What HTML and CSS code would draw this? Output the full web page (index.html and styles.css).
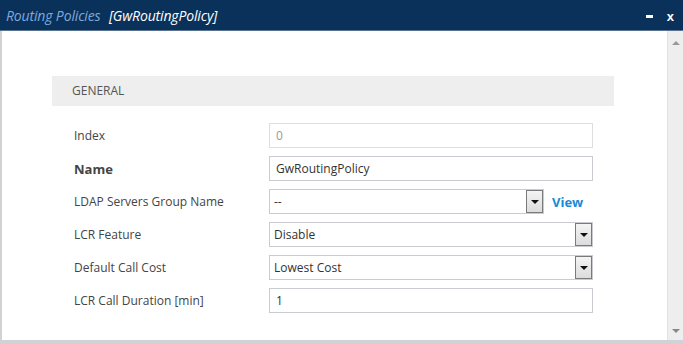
FILE: index.html
```html
<!DOCTYPE html>
<html lang="en">
<head>
  <meta charset="UTF-8" />
  <title>Routing Policies</title>
  <link rel="stylesheet" href="styles.css">
</head>
<body>
  <div class="dialog">
    <header class="titlebar">
      <div class="title">
        <span class="title-main">Routing Policies</span>
        <span class="title-sub">[GwRoutingPolicy]</span>
      </div>
      <div class="title-actions">
        <span class="btn-min"></span>
        <span class="btn-close">x</span>
      </div>
    </header>

    <div class="body">
      <main class="content">
        <div class="section-head">GENERAL</div>

        <div class="form-row">
          <label class="field-label">Index</label>
          <div class="field"><div class="input disabled">0</div></div>
        </div>
        <div class="form-row">
          <label class="field-label bold">Name</label>
          <div class="field"><div class="input">GwRoutingPolicy</div></div>
        </div>
        <div class="form-row">
          <label class="field-label">LDAP Servers Group Name</label>
          <div class="field">
            <div class="select short">--<span class="drop"><i></i></span></div>
            <a class="view-link">View</a>
          </div>
        </div>
        <div class="form-row">
          <label class="field-label">LCR Feature</label>
          <div class="field"><div class="select">Disable<span class="drop"><i></i></span></div></div>
        </div>
        <div class="form-row">
          <label class="field-label">Default Call Cost</label>
          <div class="field"><div class="select">Lowest Cost<span class="drop"><i></i></span></div></div>
        </div>
        <div class="form-row">
          <label class="field-label">LCR Call Duration [min]</label>
          <div class="field"><div class="input">1</div></div>
        </div>
      </main>

      <!-- scrollbar -->
      <div class="scrollbar">
        <span class="arrow up"></span>
        <span class="arrow down"></span>
      </div>
    </div>
  </div>
</body>
</html>
```

FILE: styles.css
```css
:root {
  --navy: #0a3159;
  --title-blue: #7fa9dc;
  --text: #444;
  --border: #c8ccd0;
  --link: #1a8ad6;
}
* { box-sizing: border-box; margin: 0; padding: 0; }
html, body { height: 100%; }
body {
  font-family: 'Open Sans', 'Liberation Sans', sans-serif;
  color: var(--text);
  background: #fff;
  overflow: hidden;
}
.dialog {
  display: flex;
  flex-direction: column;
  height: 344px;
  border-left: 2px solid #d0d3d6;
  border-bottom: 4px solid #d0d3d6;
}

/* title bar */
.titlebar {
  height: 31px;
  background: var(--navy);
  display: flex;
  align-items: center;
  justify-content: space-between;
  margin-left: -2px;
  padding-left: 6px;
  border-bottom: 1px solid #5a7390;
}
.title { font-style: italic; font-size: 14px; letter-spacing: -0.15px; }
.title-main { color: var(--title-blue); margin-right: 5px; }
.title-sub { color: #fff; }
.title-actions {
  display: flex;
  align-items: center;
  gap: 14px;
  padding-right: 9px;
  padding-top: 2px;
}
.btn-min {
  width: 7px;
  height: 3px;
  background: #fff;
  margin-top: 1px;
}
.btn-close {
  color: #fff;
  font-weight: 700;
  font-size: 13px;
  font-family: 'Liberation Sans', sans-serif;
  line-height: 1;
}

/* body */
.body {
  flex: 1;
  display: flex;
  min-height: 0;
}
.content {
  flex: 1;
  padding: 45px 0 0 50px;
}
.section-head {
  width: 562px;
  height: 30px;
  background: #eeeeee;
  font-size: 12px;
  color: #555;
  padding-left: 20px;
  line-height: 30px;
  margin-bottom: 13px;
}
.form-row {
  display: flex;
  align-items: center;
  height: 33px;
  padding-left: 22px;
}
.field-label {
  width: 195px;
  font-size: 12px;
  color: #444;
}
.field-label.bold { font-weight: 700; font-size: 13px; }
.field {
  display: flex;
  align-items: center;
}
.input, .select {
  width: 324px;
  height: 25px;
  border: 1px solid var(--border);
  font-size: 12px;
  line-height: 23px;
  padding-left: 6px;
  color: #333;
  position: relative;
}
.input.disabled { color: #999; border-color: #dcdfe2; }
.select { padding-left: 4px; }
.select.short { width: 275px; }
.drop {
  position: absolute;
  right: 0;
  top: 0;
  width: 17px;
  height: 23px;
  border: 1px solid #7a7a7a;
  background: linear-gradient(#f4f4f4, #dcdcdc);
  display: flex;
  align-items: center;
  justify-content: center;
}
.drop i {
  width: 0;
  height: 0;
  border-left: 4px solid transparent;
  border-right: 4px solid transparent;
  border-top: 4px solid #111;
}
.view-link {
  color: var(--link);
  font-weight: 700;
  font-size: 13px;
  margin-left: 8px;
  cursor: pointer;
}

/* scrollbar */
.scrollbar {
  width: 16px;
  background: #eeeeee;
  border-left: 1px solid #e2e2e2;
  display: flex;
  flex-direction: column;
  justify-content: space-between;
  align-items: center;
  padding: 10px 0 7px;
}
.arrow {
  width: 0;
  height: 0;
  border-left: 4px solid transparent;
  border-right: 4px solid transparent;
}
.arrow.up { border-bottom: 4px solid #999; }
.arrow.down { border-top: 4px solid #888; }
```
